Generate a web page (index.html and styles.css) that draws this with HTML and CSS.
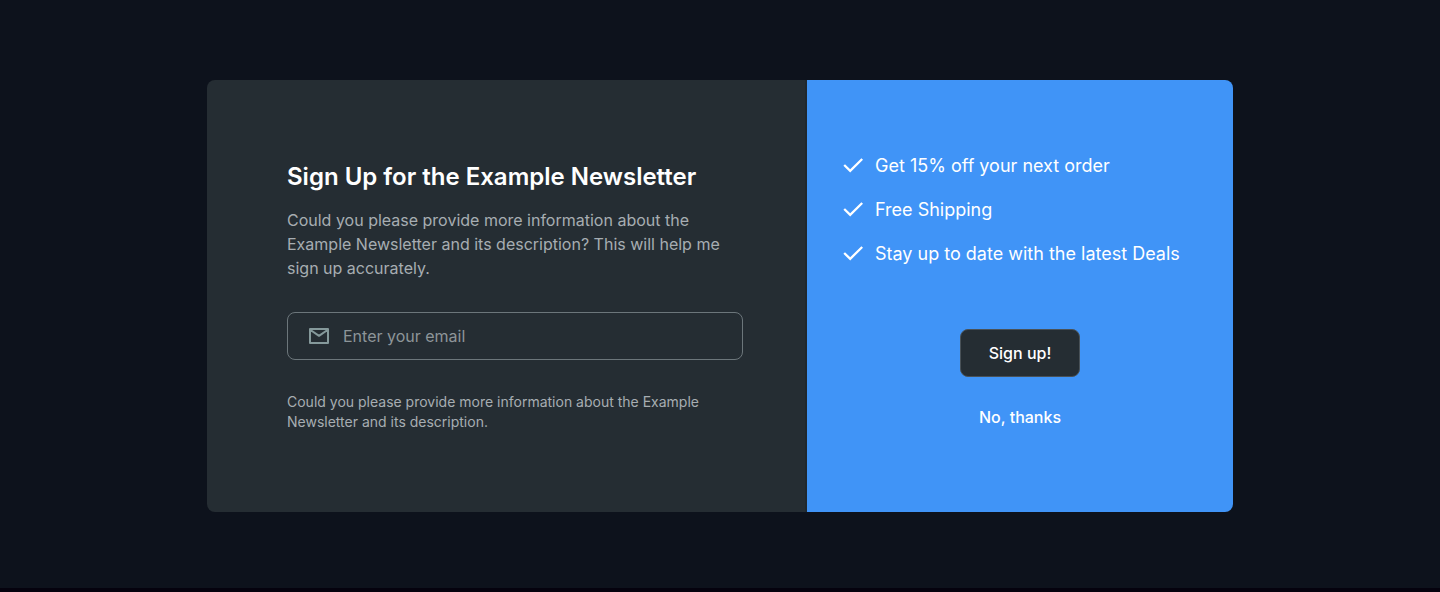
FILE: index.html
```html
<!DOCTYPE html>
<html lang="en">
<head>
<meta charset="utf-8">
<meta name="viewport" content="width=device-width, initial-scale=1">
<title>Newsletter sign up</title>
<link rel="stylesheet" href="styles.css">
</head>
<body>
<main class="page">
  <form class="card">
    <section class="details">
      <h1 class="title">Sign Up for the Example Newsletter</h1>
      <p class="intro">Could you please provide more information about the Example Newsletter and its description? This will help me sign up accurately.</p>
      <label class="field">
        <svg class="icon" viewBox="0 0 24 24" aria-hidden="true"><path d="M3 5h18v14H3zM3.500 6l8.500 5.800L20.500 6" fill="none" stroke="currentColor" stroke-width="2" stroke-linejoin="round"/></svg>
        <input class="input" type="email" placeholder="Enter your email" aria-label="Enter your email">
      </label>
      <p class="note">Could you please provide more information about the Example Newsletter and its description.</p>
    </section>
    <section class="offer">
      <ul class="perks">
        <li class="perk"><svg class="icon" viewBox="0 0 24 24" aria-hidden="true"><path d="M3.200 11l6 5.800L21.200 5" fill="none" stroke="currentColor" stroke-width="2.300"/></svg>Get 15% off your next order</li>
        <li class="perk"><svg class="icon" viewBox="0 0 24 24" aria-hidden="true"><path d="M3.200 11l6 5.800L21.200 5" fill="none" stroke="currentColor" stroke-width="2.300"/></svg>Free Shipping</li>
        <li class="perk"><svg class="icon" viewBox="0 0 24 24" aria-hidden="true"><path d="M3.200 11l6 5.800L21.200 5" fill="none" stroke="currentColor" stroke-width="2.300"/></svg>Stay up to date with the latest Deals</li>
      </ul>
      <div class="actions">
        <button class="button primary" type="submit">Sign up!</button>
        <button class="button quiet" type="button">No, thanks</button>
      </div>
    </section>
  </form>
</main>
</body>
</html>
```
FILE: styles.css
```css
* {
  box-sizing: border-box;
}

body {
  margin: 0;
  min-height: 100vh;
  background: #0d121c;
  color: #fff;
  font-family: Inter, "Liberation Sans", sans-serif;
  font-size: 16px;
  line-height: 24px;
}

.page {
  display: flex;
  align-items: center;
  justify-content: center;
  min-height: 100vh;
  padding: 80px 32px;
  box-shadow: inset 0 -4px #05020e;
}

.card {
  display: grid;
  grid-template-columns: 600fr 426fr;
  width: 100%;
  max-width: 1026px;
  border-radius: 8px;
  overflow: hidden;
}

.details {
  padding: 80px 62px 80px 80px;
  border-right: 2px solid #20282e;
  background: #252d33;
}

.title {
  margin: 0 0 14px;
  font-size: 24px;
  font-weight: 600;
  line-height: 34px;
}

.intro {
  margin: 0 0 32px;
  color: #a7adb2;
}

.field {
  display: flex;
  align-items: center;
  gap: 12px;
  height: 48px;
  padding: 0 19px;
  border: 1px solid #6c767b;
  border-radius: 8px;
  color: #85999b;
}

.icon {
  flex: none;
  width: 24px;
  height: 24px;
}

.input {
  flex: 1;
  min-width: 0;
  padding: 0;
  border: 0;
  outline: 0;
  background: transparent;
  color: #fff;
  font: inherit;
}

.input::placeholder {
  color: #8d9599;
  opacity: 1;
}

.note {
  margin: 32px 0 0;
  color: #a7adb2;
  font-size: 14px;
  line-height: 20px;
}

.offer {
  display: flex;
  flex-direction: column;
  gap: 61px;
  padding: 72px 34px 64px;
  background: #4094f7;
}

.perks {
  display: grid;
  gap: 16px;
  margin: 0;
  padding: 0;
  list-style: none;
  font-size: 18px;
  line-height: 28px;
}

.perk {
  display: flex;
  align-items: center;
  gap: 10px;
}

.actions {
  display: flex;
  flex-direction: column;
  align-items: center;
  gap: 16px;
}

.button {
  height: 48px;
  padding: 0 28px;
  border: 1px solid transparent;
  border-radius: 8px;
  background: transparent;
  color: #fff;
  font: inherit;
  font-weight: 500;
  cursor: pointer;
}

.primary {
  border-color: #495157;
  background: #252d33;
}
```
